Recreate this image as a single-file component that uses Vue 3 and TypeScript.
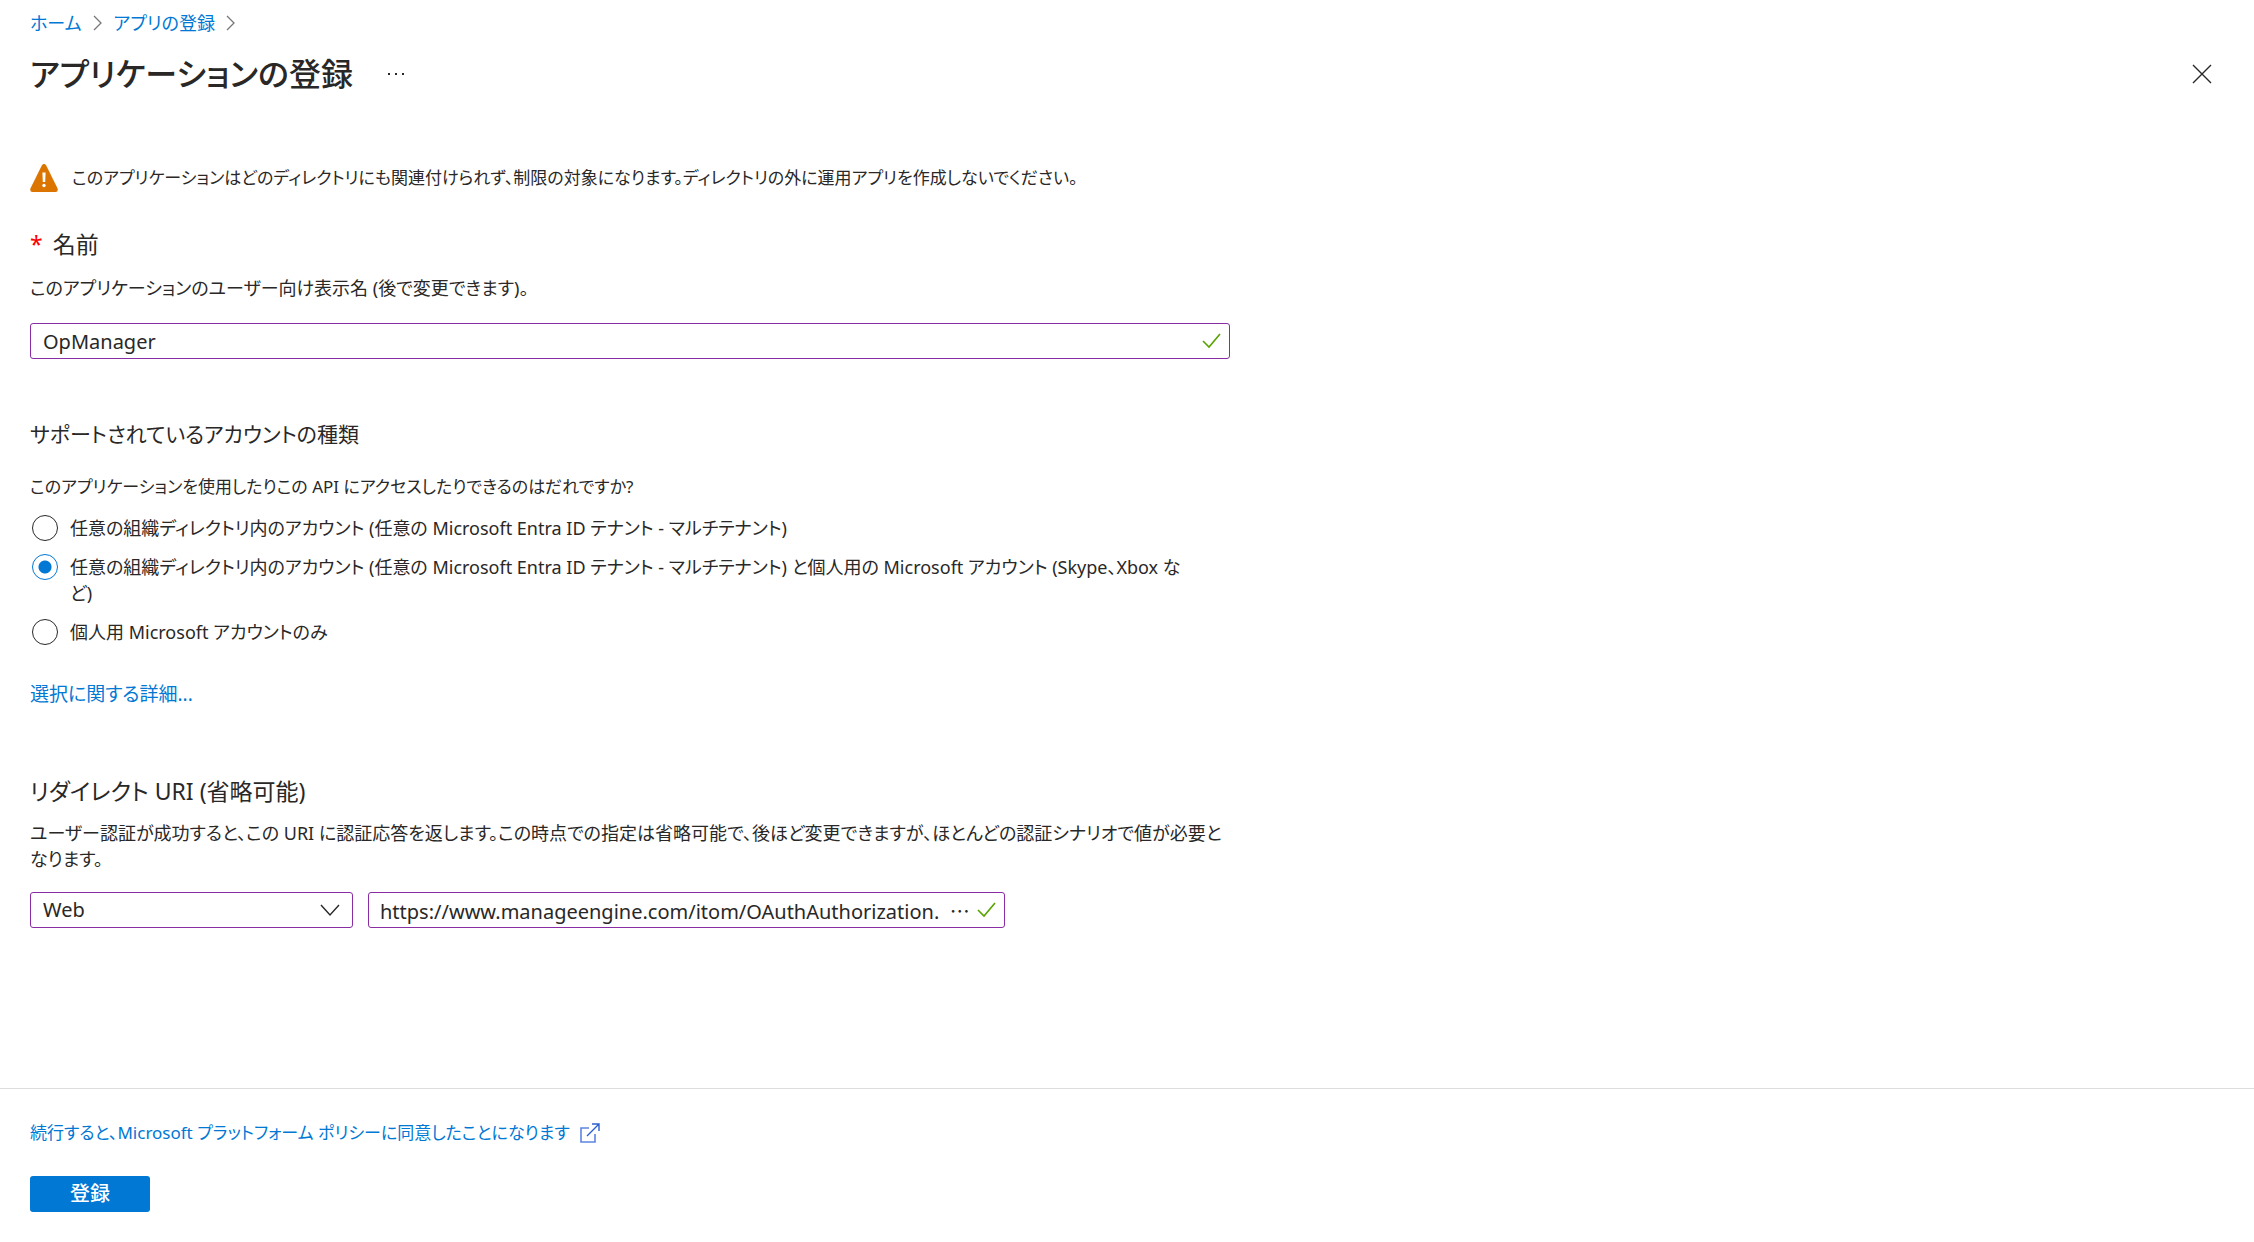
<script setup lang="ts">
import { ref } from 'vue'

interface AccountType {
  id: string
  label: string
}

const accountTypes: AccountType[] = [
  { id: 'orgs', label: '任意の組織ディレクトリ内のアカウント (任意の Microsoft Entra ID テナント - マルチテナント)' },
  {
    id: 'orgs-personal',
    label:
      '任意の組織ディレクトリ内のアカウント (任意の Microsoft Entra ID テナント - マルチテナント) と個人用の Microsoft アカウント (Skype、Xbox など)',
  },
  { id: 'personal', label: '個人用 Microsoft アカウントのみ' },
]

const appName = ref('OpManager')
const accountType = ref('orgs-personal')
const platform = ref('Web')
const redirectUri = ref('https://www.manageengine.com/itom/OAuthAuthorization.  ⋯')
</script>

<template>
  <div class="blade" lang="ja">
    <header class="head">
      <nav class="crumbs" aria-label="階層">
        <a href="#">ホーム</a>
        <svg class="sep" viewBox="0 0 10 18" aria-hidden="true"><path d="M1 2l7 7-7 7" /></svg>
        <a href="#">アプリの登録</a>
        <svg class="sep" viewBox="0 0 10 18" aria-hidden="true"><path d="M1 2l7 7-7 7" /></svg>
      </nav>
      <div class="title-row">
        <h1>アプリケーションの登録</h1>
        <button class="icon-btn" type="button" aria-label="その他">
          <svg width="18" height="4" viewBox="0 0 18 4"><path d="M1 1h2v2H1zM8 1h2v2H8zM15 1h2v2h-2z" fill="#292827" /></svg>
        </button>
        <button class="icon-btn close" type="button" aria-label="閉じる">
          <svg width="20" height="20" viewBox="0 0 20 20"><path d="M1 1l18 18M19 1L1 19" fill="none" stroke="#292827" stroke-width="1.4" /></svg>
        </button>
      </div>
    </header>

    <form id="register" class="form" @submit.prevent>
      <p class="notice compact">
        <svg width="28" height="28" viewBox="0 0 28 28" aria-hidden="true">
          <path d="M11.800 1.400Q14 -1.600 16.200 1.400L27.600 24.400Q28.400 28 25.600 28H2.400Q-.400 28 .400 24.400z" fill="#db7500" />
          <path d="M12.400 8.500h3.200l-.4 9.500h-2.400z" fill="#fff" />
          <circle cx="14" cy="21.500" r="1.700" fill="#fff" />
        </svg>
        <span>このアプリケーションはどのディレクトリにも関連付けられず、制限の対象になります。ディレクトリの外に運用アプリを作成しないでください。</span>
      </p>

      <section class="name">
        <label class="heading" for="app-name"><span class="req">*</span>名前</label>
        <p class="text">このアプリケーションのユーザー向け表示名 (後で変更できます)。</p>
        <div class="field">
          <input id="app-name" v-model="appName" type="text" required />
          <svg class="check" viewBox="0 0 20 16" aria-hidden="true"><path d="M1 8l6 6L18 1" /></svg>
        </div>
      </section>

      <fieldset class="accounts">
        <legend class="heading">サポートされているアカウントの種類</legend>
        <p class="text compact">このアプリケーションを使用したりこの API にアクセスしたりできるのはだれですか?</p>
        <div class="options">
          <label v-for="t in accountTypes" :key="t.id" class="option">
            <input v-model="accountType" type="radio" name="account-type" :value="t.id" />
            <span>{{ t.label }}</span>
          </label>
        </div>
        <a class="more" href="#">選択に関する詳細...</a>
      </fieldset>

      <section class="redirect">
        <h2 class="heading">リダイレクト URI (省略可能)</h2>
        <p class="text">ユーザー認証が成功すると、この URI に認証応答を返します。この時点での指定は省略可能で、後ほど変更できますが、ほとんどの認証シナリオで値が必要となります。</p>
        <div class="uri-row">
          <div class="field platform">
            <select v-model="platform" aria-label="プラットフォーム">
              <option>Web</option>
            </select>
            <svg class="chevron" viewBox="0 0 20 14" aria-hidden="true"><path d="M1 2l9 10 9-10" /></svg>
          </div>
          <div class="field uri">
            <input v-model="redirectUri" type="text" aria-label="リダイレクト URI" />
            <svg class="check" viewBox="0 0 20 16" aria-hidden="true"><path d="M1 8l6 6L18 1" /></svg>
          </div>
        </div>
      </section>
    </form>

    <footer class="foot">
      <a class="policy compact" href="#">
        <span>続行すると、Microsoft プラットフォーム ポリシーに同意したことになります</span>
        <svg width="20" height="20" viewBox="0 0 20 20" fill="none" aria-hidden="true">
          <path d="M9 5H1v14h14v-8" stroke="#5c86e0" stroke-width="1.6" />
          <path d="M7 13L18.500 1.500M12 1h7v7" stroke="#2a5fd0" stroke-width="1.4" />
        </svg>
      </a>
      <button class="submit" type="submit" form="register">登録</button>
    </footer>
  </div>
</template>

<style>
body {
  margin: 0;
  background: #fff;
}
</style>

<style scoped>
.blade {
  display: flex;
  flex-direction: column;
  min-height: 100vh;
  color: #292827;
  font: 18px/26px 'Noto Sans', 'Noto Sans CJK JP', sans-serif;
  font-feature-settings: 'palt';
}
h1, h2, p, fieldset, legend {
  margin: 0;
  padding: 0;
  border: 0;
  font-weight: 400;
}
a {
  color: #0078d4;
  text-decoration: none;
}
.compact {
  font-size: 17px;
}
.head {
  padding: 10px 42px 0 30px;
}
.crumbs {
  display: flex;
  align-items: center;
  gap: 11px;
}
.sep {
  width: 10px;
  height: 18px;
  fill: none;
  stroke: #777;
  stroke-width: 1.3;
}
.title-row {
  display: flex;
  align-items: center;
  margin-top: 14px;
}
h1 {
  font-size: 32px;
  font-weight: 500;
  line-height: 48px;
}
.icon-btn {
  display: flex;
  margin-left: 34px;
  padding: 0;
  border: 0;
  background: none;
}
.icon-btn.close {
  margin-left: auto;
}
.form {
  flex: 1;
  max-width: 1200px;
  padding: 66px 30px 0;
}
.notice {
  display: flex;
  align-items: center;
  gap: 14px;
}
.heading {
  display: block;
  font-size: 23px;
  line-height: 32px;
}
.accounts .heading {
  font-size: 21px;
}
.req {
  margin-right: 10px;
  color: #f00;
}
.name {
  margin-top: 36px;
}
.name .text {
  margin: 15px 0 22px;
}
.field {
  display: grid;
  align-items: center;
}
.field > * {
  grid-area: 1 / 1;
}
.field input,
.field select {
  box-sizing: border-box;
  width: 100%;
  height: 36px;
  padding: 0 40px 0 12px;
  border: 1px solid #8a2da5;
  border-radius: 3px;
  background: #fff;
  color: inherit;
  font: inherit;
  font-size: 20px;
  appearance: none;
}
.field.uri input {
  padding: 0 28px 0 11px;
}
.check,
.chevron {
  justify-self: end;
  width: 20px;
  fill: none;
  pointer-events: none;
}
.check {
  height: 16px;
  margin-right: 8px;
  stroke: #57a300;
  stroke-width: 1.6;
}
.chevron {
  height: 14px;
  margin-right: 13px;
  stroke: #292827;
  stroke-width: 1.4;
}
.accounts {
  margin-top: 59px;
}
.accounts .text {
  margin-top: 24px;
}
.options {
  display: grid;
  gap: 13px;
  margin-top: 15px;
  padding-right: 40px;
}
.option {
  display: flex;
  gap: 12px;
}
.option input {
  box-sizing: border-box;
  flex: none;
  width: 26px;
  height: 26px;
  margin: 0 0 0 2px;
  border: 1px solid #292827;
  border-radius: 50%;
  background: #fff;
  appearance: none;
}
.option input:checked {
  border-color: #0078d4;
  background: radial-gradient(circle, #0078d4 6px, #fff 7px);
}
.more {
  display: block;
  margin-top: 36px;
  font-size: 19px;
}
.redirect {
  margin-top: 68px;
}
.redirect .text {
  margin: 13px 0 20px;
}
.uri-row {
  display: flex;
  gap: 15px;
}
.platform {
  flex: 0 0 323px;
}
.uri {
  flex: 0 1 637px;
}
.foot {
  padding: 31px 30px 30px;
  border-top: 1px solid #ddd;
}
.policy {
  display: flex;
  align-items: center;
  gap: 10px;
}
.submit {
  width: 120px;
  height: 36px;
  margin-top: 30px;
  padding: 0;
  border: 0;
  border-radius: 3px;
  background: #0078d4;
  color: #fff;
  font: inherit;
  font-size: 20px;
  font-weight: 500;
}
</style>
